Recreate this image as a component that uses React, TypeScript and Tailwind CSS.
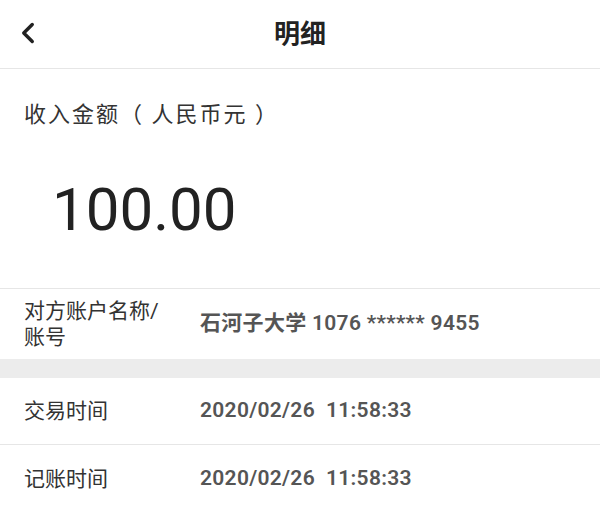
import { ChevronLeft } from 'lucide-react';

const font = { fontFamily: 'Roboto, "Noto Sans CJK SC", sans-serif' };

function Row({ label, value }: { label: React.ReactNode; value: string }) {
  return (
    <div className="flex items-center h-full">
      <div className="w-[200px] pl-6 text-[21px] leading-[26px] text-[#333]">{label}</div>
      <div className="text-[21px] tracking-[0.3px] font-semibold text-[#555] whitespace-pre">{value}</div>
    </div>
  );
}

export default function App() {
  return (
    <div className="w-[600px] h-[512px] bg-white overflow-hidden" style={font}>
      {/* Header */}
      <div className="relative h-[69px] flex items-center justify-center border-b border-[#e6e6e6]">
        <ChevronLeft className="absolute left-[11px] top-[16px] w-[34px] h-[34px] text-[#222]" strokeWidth={2.4} />
        <span className="text-[26px] font-bold text-[#222]">明细</span>
      </div>

      {/* Amount */}
      <div className="h-[220px] border-b border-[#e6e6e6] flex flex-col">
        <div className="pl-6 pt-[31px] text-[22px] leading-[30px] tracking-[2px] text-[#333]">收入金额（ 人民币元 ）</div>
        <div className="pl-[52px] pt-[44px] text-[60px] leading-[72px] text-[#222]">100.00</div>
      </div>

      {/* Counterparty */}
      <div className="h-[70px]">
        <Row
          label={
            <>
              对方账户名称/
              <br />
              账号
            </>
          }
          value="石河子大学 1076 ****** 9455"
        />
      </div>

      <div className="h-[19px] bg-[#ececec]" />

      <div className="h-[67px] border-b border-[#e6e6e6]">
        <Row label="交易时间" value="2020/02/26  11:58:33" />
      </div>
      <div className="h-[67px]">
        <Row label="记账时间" value="2020/02/26  11:58:33" />
      </div>
    </div>
  );
}
